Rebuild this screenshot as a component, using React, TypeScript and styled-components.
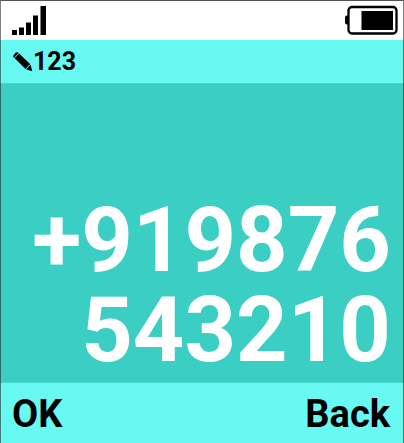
import React, { useState } from "react";
import styled, { createGlobalStyle } from "styled-components";

const GlobalStyle = createGlobalStyle`
  *, *::before, *::after { box-sizing: border-box; }
  body { margin: 0; background: #3bcec3; font-family: Roboto, sans-serif; }
`;

const Screen = styled.main`
  display: flex;
  flex-direction: column;
  min-height: 100vh;
  position: relative;
  background: #3bcec3;

  &::after {
    content: "";
    position: absolute;
    inset: 0;
    border: 1px solid rgba(40, 40, 40, 0.6);
    border-top-color: rgba(40, 40, 40, 0.8);
    border-bottom: 0;
    pointer-events: none;
  }
`;

const StatusBar = styled.header`
  display: flex;
  align-items: center;
  justify-content: space-between;
  height: 40px;
  padding: 0 6px 0 12px;
  background: #fff;
`;

const ModeBar = styled.div`
  display: flex;
  align-items: center;
  height: 43px;
  padding: 0 13px;
  background: #68f9f2;
  font-size: 25px;
  font-weight: 700;
  line-height: 43px;
  color: #000;
`;

const EntryArea = styled.section`
  display: flex;
  flex: 1;
  flex-direction: column;
  justify-content: flex-end;
  padding: 0 13px 6px;
  border: 0 solid #45d6cd;
  border-width: 1px 0;
`;

const NumberInput = styled.textarea`
  display: block;
  width: 100%;
  height: 180px;
  padding: 0;
  border: 0;
  outline: 0;
  resize: none;
  overflow: hidden;
  background: transparent;
  color: #fff;
  font: 700 90px/90px Roboto, sans-serif;
  text-align: right;
  word-break: break-all;
`;

const SoftKeys = styled.footer`
  display: flex;
  align-items: center;
  justify-content: space-between;
  height: 60px;
  padding: 0 14px 0 12px;
  background: #68f9f2;
`;

const SoftKey = styled.button`
  padding: 2px 0 0;
  border: 0;
  background: transparent;
  color: #000;
  font: 700 38px/60px Roboto, sans-serif;
  cursor: pointer;
`;

const SignalIcon = () => (
  <svg width="34" height="30" viewBox="0 0 34 30" role="img" aria-label="Signal strength">
    <path d="M0 25h5v5H0zM7 22.500h5V30H7zM14 17.500h5V30h-5zM21 10.500h5V30h-5zM28.500 1H34v29h-5.500z" />
  </svg>
);

const BatteryIcon = () => (
  <svg width="53" height="30" viewBox="0 0 53 30" role="img" aria-label="Battery level">
    <rect x="3.500" y="2" width="48" height="26.500" rx="3.500" fill="none" stroke="#000" strokeWidth="2.300" />
    <path d="M3 10.500H2Q0 10.500 0 12.500v5q0 2 2 2h1z" />
    <path d="M16.500 6H48v19H16.500z" />
  </svg>
);

const PencilIcon = () => (
  <svg width="20" height="20" viewBox="0 0 20 20" aria-hidden="true">
    <path d="M.4 5.200Q-.1 4 1.200 2.200T4 .3Q5 .2 5.600 1L1.300 5.800Q.7 5.800.4 5.200zM1.700 6.300 6.200 1.500 17.300 12.200 12.500 17zM13 17.300 17.600 12.700 19.300 19.300z" />
    <path d="M12.800 16.900 17.300 12.500" stroke="#68f9f2" strokeWidth=".6" />
  </svg>
);

export default function App() {
  const [number, setNumber] = useState("+919876543210");

  return (
    <>
      <GlobalStyle />
      <Screen>
        <StatusBar>
          <SignalIcon />
          <BatteryIcon />
        </StatusBar>
        <ModeBar>
          <PencilIcon />
          <span>123</span>
        </ModeBar>
        <EntryArea>
          <NumberInput
            aria-label="Phone number"
            rows={2}
            spellCheck={false}
            value={number}
            onChange={(event) => setNumber(event.target.value)}
          />
        </EntryArea>
        <SoftKeys>
          <SoftKey type="button">OK</SoftKey>
          <SoftKey type="button">Back</SoftKey>
        </SoftKeys>
      </Screen>
    </>
  );
}
